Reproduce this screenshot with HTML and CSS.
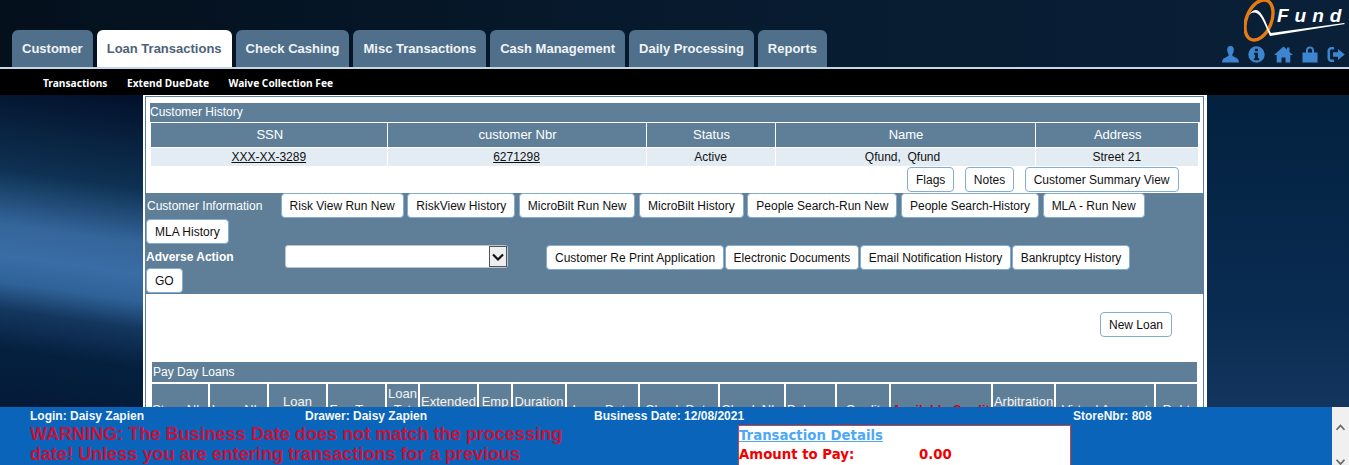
FILE: index.html
```html
<!DOCTYPE html>
<html>
<head>
  <title>QFund - Customer History</title>
  <link rel="stylesheet" href="styles.css">
</head>
<body>

  <div class="header">
    <ul class="tabs">
      <li class="tab">Customer</li>
      <li class="tab active">Loan Transactions</li>
      <li class="tab">Check Cashing</li>
      <li class="tab">Misc Transactions</li>
      <li class="tab">Cash Management</li>
      <li class="tab">Daily Processing</li>
      <li class="tab">Reports</li>
    </ul>
    <div class="brand">
      <svg class="logo" width="105" height="42" viewBox="0 0 105 42">
        <ellipse cx="15" cy="20" rx="12.5" ry="21" transform="rotate(22 15 20)" fill="none" stroke="#e57b12" stroke-width="3.4"/>
        <path d="M5 15 C10 8 14 9 18 15 C22 21 24 29 27 33 L100 23 L101 24 L26 36 C23 30 20 21 16 16 C13 12 9 11 5 15 Z" fill="#fff"/>
        <text class="logo-text" x="33" y="22">Fund</text>
      </svg>
      <div class="icons">
        <svg width="17" height="17" viewBox="0 0 17 17"><path d="M8.5 0C5.9 0 5 2 5.2 4.3 5.4 6.3 6 7.6 6.8 8.5 6.9 10 5.5 10.6 3.5 11.4 1.5 12.2.3 13.2 0 16.5H17C16.7 13.200 15.500 12.200 13.500 11.400 11.500 10.600 10.100 10 10.200 8.500 11 7.600 11.600 6.300 11.800 4.300 12 2 11.100 0 8.500 0Z"/></svg>
        <svg width="17" height="17" viewBox="0 0 17 17"><path fill-rule="evenodd" d="M8.500.3a8.200 8.200 0 1 0 0 16.400 8.200 8.200 0 0 0 0-16.400ZM7 2.800h3v2.500H7ZM6 6.800h4v5.400h1.200v2H5.800v-2H7V8.800H6Z"/></svg>
        <svg width="19" height="17" viewBox="0 0 19 17"><path d="M9.500.5 0 9h2.700v7.500h4.800v-5h4v5h4.800V9H19L15.500 5.900V1.500h-2.500v2.200Z"/></svg>
        <svg width="16" height="17" viewBox="0 0 16 17"><path fill-rule="evenodd" d="M4 6.500V4.500C4 1.800 5.500.5 8 .5s4 1.300 4 4v2h3.500v10H.5v-10ZM6 6.500h4V4.500C10 3 9.300 2.500 8 2.500S6 3 6 4.500Z"/></svg>
        <svg width="18" height="17" viewBox="0 0 18 17"><path d="M7 1H4.500C2 1 .5 2.700 .5 5v7c0 2.300 1.500 4 4 4H7v-2.500H4.500c-1 0-1.500-.6-1.500-1.500V5c0-.9.500-1.500 1.500-1.500H7Z"/><path d="M11 3 17.800 8.500 11 14V10.800H6V6.200H11Z"/></svg>
      </div>
    </div>
  </div>

  <div class="subnav">
    <span>Transactions</span>
    <span>Extend DueDate</span>
    <span>Waive Collection Fee</span>
  </div>

  <div class="main">
    <div class="panel">
      <div class="frame">

        <div class="title-bar history-title">Customer History</div>
        <table class="history">
          <colgroup>
            <col class="c-ssn"><col class="c-nbr"><col class="c-status"><col class="c-name"><col class="c-addr">
          </colgroup>
          <tr>
            <th>SSN</th>
            <th>customer Nbr</th>
            <th>Status</th>
            <th>Name</th>
            <th>Address</th>
          </tr>
          <tr>
            <td><a href="#">XXX-XX-3289</a></td>
            <td><a href="#">6271298</a></td>
            <td>Active</td>
            <td class="name-cell">Qfund,&nbsp; Qfund</td>
            <td>Street 21</td>
          </tr>
        </table>

        <div class="summary-row">
          <button class="btn">Flags</button>
          <button class="btn">Notes</button>
          <button class="btn">Customer Summary View</button>
        </div>

        <div class="info">
          <div class="info-row">
            <span class="info-label">Customer Information</span>
            <button class="btn">Risk View Run New</button>
            <button class="btn">RiskView History</button>
            <button class="btn">MicroBilt Run New</button>
            <button class="btn">MicroBilt History</button>
            <button class="btn">People Search-Run New</button>
            <button class="btn">People Search-History</button>
            <button class="btn">MLA - Run New</button>
            <button class="btn">MLA History</button>
          </div>
          <div class="adverse-row">
            <span class="adverse-label">Adverse Action</span>
            <div class="select"><span class="select-arrow"><svg width="14" height="14" viewBox="0 0 14 14"><path d="M2 4.500 7 9.500 12 4.500" fill="none" stroke="#111" stroke-width="2.200"/></svg></span></div>
            <div class="adverse-btns">
              <button class="btn">Customer Re Print Application</button>
              <button class="btn">Electronic Documents</button>
              <button class="btn">Email Notification History</button>
              <button class="btn">Bankruptcy History</button>
            </div>
          </div>
          <button class="btn">GO</button>
        </div>

        <div class="new-loan-row">
          <button class="btn">New Loan</button>
        </div>

        <div class="title-bar loans-title">Pay Day Loans</div>
        <table class="loans">
          <colgroup>
            <col><col><col><col><col><col><col><col><col><col><col><col><col><col><col><col><col>
          </colgroup>
          <tr>
            <th>Store Nbr</th>
            <th>Loan Nbr</th>
            <th>Loan Type</th>
            <th>Fee Type</th>
            <th>Loan Tot Due</th>
            <th>Extended Loan</th>
            <th>Emp Ind</th>
            <th>Duration Days</th>
            <th>Loan Date</th>
            <th>Check Date</th>
            <th>Check Nbr</th>
            <th>Balance</th>
            <th>Credit</th>
            <th class="alert">Available Credit</th>
            <th>Arbitration Ind</th>
            <th>Virtual Account</th>
            <th>Debt</th>
          </tr>
        </table>

      </div>
    </div>
  </div>

  <div class="footer">
    <div class="footer-body">
      <div class="footer-top">
        <span>Login: Daisy Zapien</span>
        <span>Drawer: Daisy Zapien</span>
        <span>Business Date: 12/08/2021</span>
        <span>StoreNbr: 808</span>
      </div>
      <div class="footer-bottom">
        <p class="warning">WARNING: The Business Date does not match the processing date! Unless you are entering transactions for a previous</p>
        <div class="details">
          <a class="details-title" href="#">Transaction Details</a>
          <div class="details-row"><span class="details-label">Amount to Pay:</span><span>0.00</span></div>
        </div>
      </div>
    </div>
    <div class="scrollbar">
      <svg width="13" height="9" viewBox="0 0 13 9"><path d="M1 8 6.500 2 12 8" fill="none" stroke="#666" stroke-width="2.400"/></svg>
      <svg width="13" height="9" viewBox="0 0 13 9"><path d="M1 1 6.500 7 12 1" fill="none" stroke="#666" stroke-width="2.400"/></svg>
    </div>
  </div>

</body>
</html>
```

FILE: styles.css
```css
html, body {
  height: 465px;
  margin: 0;
  overflow: hidden;
}

body {
  font-family: "Liberation Sans", Arial, sans-serif;
  font-size: 12px;
  background: #04142a;
  position: relative;
}

/* top bar */
.header {
  height: 67px;
  display: flex;
  justify-content: space-between;
  background: linear-gradient(90deg, #04101c, #071a2e 50%, #0a2038);
  border-bottom: 2px solid #c5d6e6;
}

.tabs {
  list-style: none;
  margin: 30px 0 0 12px;
  padding: 0;
  display: flex;
  gap: 4px;
}

.tab {
  height: 37px;
  line-height: 37px;
  padding: 0 10px;
  background: #4f6f8a;
  color: #f0f4f8;
  font-size: 13px;
  font-weight: bold;
  border-radius: 6px 6px 0 0;
}

.tab.active {
  background: #fff;
  color: #4d6278;
}

.brand {
  width: 125px;
  display: flex;
  flex-direction: column;
  align-items: flex-end;
}

.logo-text {
  font-family: "Liberation Sans", Arial, sans-serif;
  font-size: 19px;
  font-weight: bold;
  font-style: italic;
  letter-spacing: 6px;
  fill: #fff;
}

.icons {
  display: flex;
  gap: 9px;
  margin: 4px 4px 0 0;
}

.icons svg {
  fill: #3d86cf;
}

.subnav {
  height: 26px;
  box-sizing: border-box;
  padding: 2px 0 0 43px;
  background: #000;
  color: #fff;
  font-family: "Noto Sans", sans-serif;
  font-size: 10.2px;
  font-weight: bold;
  display: flex;
  align-items: center;
  gap: 19.5px;
}

/* main area */
.main {
  height: 370px;
  padding-left: 143px;
  background:
    linear-gradient(180deg, #03213f, #0a2c52 60%, #1a3c66) right top / 142px 100% no-repeat,
    linear-gradient(188deg, #02102a 0%, #0e3152 24%, #34659b 38%, #3a6da5 46%, #2f6298 53%, #14375f 60%, #05203f 70%, #021530 100%) left top / 143px 100% no-repeat;
}

.panel {
  width: 1064px;
  height: 370px;
  background: #fff;
  box-sizing: border-box;
  padding: 1px 3px 0 2px;
  overflow: hidden;
}

.frame {
  height: 400px;
  border: 1px solid #5f7f99;
  padding-top: 6px;
  background: #fff;
}

.title-bar {
  background: #5f7f99;
  color: #fff;
  height: 19px;
  line-height: 19px;
  font-size: 12px;
}

.history-title {
  margin: 0 3px 0 4px;
}

.loans-title {
  margin: 0 6px 0 6px;
  padding-left: 1px;
  height: 20px;
  line-height: 20px;
}

table {
  border-collapse: collapse;
  table-layout: fixed;
}

.history {
  margin: 0 0 0 5px;
  width: 1047px;
}

.c-ssn { width: 236px; }
.c-nbr { width: 259px; }
.c-status { width: 129px; }
.c-name { width: 260px; }
.c-addr { width: 163px; }

.history th {
  background: #5f7f99;
  color: #fff;
  font-size: 13px;
  font-weight: normal;
  height: 22px;
  padding: 0 0 2px 2px;
  border: 1px solid #fff;
}

.history td {
  background: #e4ecf3;
  height: 18px;
  padding: 0;
  text-align: center;
  color: #111;
  border-left: 1px solid #fff;
  border-right: 1px solid #fff;
}

.history .name-cell {
  padding-right: 5px;
}

.history th:first-child, .history td:first-child { border-left: 0; }
.history th:last-child, .history td:last-child { border-right: 0; }

.history a {
  color: #111;
}

.btn {
  height: 25px;
  padding: 0 8px;
  background: #fff;
  color: #111;
  font-family: "Liberation Sans", Arial, sans-serif;
  font-size: 12px;
  border: 1px solid #84add0;
  border-radius: 4px;
  white-space: nowrap;
}

.summary-row {
  height: 26px;
  margin-top: 1px;
  display: flex;
  gap: 10.5px;
  padding-left: 761px;
  align-items: flex-start;
}

.info {
  height: 101px;
  background: #5f7f99;
  color: #fff;
}

.info-row {
  display: flex;
  flex-wrap: wrap;
  column-gap: 3.6px;
  margin-bottom: 1px;
}

.info-label {
  width: 131px;
  line-height: 26px;
  padding-left: 1px;
  box-sizing: border-box;
}

.adverse-row {
  display: flex;
  height: 23px;
}

.adverse-label {
  width: 139px;
  font-weight: bold;
  line-height: 25px;
}

.select {
  width: 223px;
  height: 23px;
  background: #fff;
  border: 1px solid #b9c6d2;
  border-radius: 3px;
  box-sizing: border-box;
  display: flex;
  justify-content: flex-end;
}

.select-arrow {
  width: 18px;
  background: #eee;
  border: 1px solid #555;
  box-sizing: border-box;
  display: flex;
  align-items: center;
  justify-content: center;
}

.adverse-btns {
  display: flex;
  gap: 0.5px;
  margin-left: 38px;
}

.new-loan-row {
  display: flex;
  padding: 18px 0 25px 954px;
}

.loans {
  margin: 2px 0 0 6px;
  width: 1045px;
}

.loans col { width: 59px; }
.loans col:nth-child(1) { width: 57px; }
.loans col:nth-child(5) { width: 33px; }
.loans col:nth-child(7) { width: 34px; }
.loans col:nth-child(8) { width: 54px; }
.loans col:nth-child(9) { width: 73px; }
.loans col:nth-child(10) { width: 80px; }
.loans col:nth-child(11) { width: 66px; }
.loans col:nth-child(12) { width: 51px; }
.loans col:nth-child(13) { width: 54px; }
.loans col:nth-child(14) { width: 102px; }
.loans col:nth-child(15) { width: 63px; }
.loans col:nth-child(16) { width: 100px; }
.loans col:nth-child(17) { width: 42px; }

.loans th {
  height: 52px;
  padding: 0;
  background: #5f7f99;
  color: #f2f5f8;
  font-size: 13px;
  font-weight: normal;
  line-height: 16px;
  border-left: 2px solid #fff;
}

.loans th:first-child {
  border-left: 0;
}

.loans .alert {
  color: #e00000;
  font-weight: bold;
}

/* bottom bar sits over the page */
.footer {
  position: absolute;
  left: 0;
  right: 0;
  bottom: 0;
  height: 58px;
  display: flex;
  background: #0a64b9;
  overflow: hidden;
}

.footer-body {
  flex: 1;
  padding-left: 30px;
}

.footer-top {
  display: grid;
  grid-template-columns: 275px 289px 479px auto;
  color: #f4f8fc;
  font-weight: bold;
  padding-top: 1px;
  height: 16px;
  line-height: 16px;
}

.footer-bottom {
  display: flex;
}

.warning {
  width: 708px;
  margin: 0;
  padding-right: 174px;
  box-sizing: border-box;
  color: #c8123a;
  font-size: 18px;
  font-weight: bold;
  letter-spacing: 0.04px;
  line-height: 20px;
}

.details {
  width: 333px;
  height: 60px;
  margin-top: 1px;
  background: #fff;
  border: 1px solid #d24040;
  box-sizing: border-box;
  font-family: "DejaVu Sans", Verdana, sans-serif;
  font-size: 13.3px;
  font-weight: bold;
  color: #f00000;
  padding-top: 1px;
}

.details-title {
  display: block;
  width: max-content;
  color: #4ea8f5;
  line-height: 18px;
}

.details-row {
  display: flex;
  line-height: 20px;
}

.details-label {
  width: 180px;
}

.scrollbar {
  width: 17px;
  background: #f0f0f0;
  display: flex;
  flex-direction: column;
  align-items: center;
  padding-top: 17px;
  box-sizing: border-box;
  gap: 28px;
}
```
